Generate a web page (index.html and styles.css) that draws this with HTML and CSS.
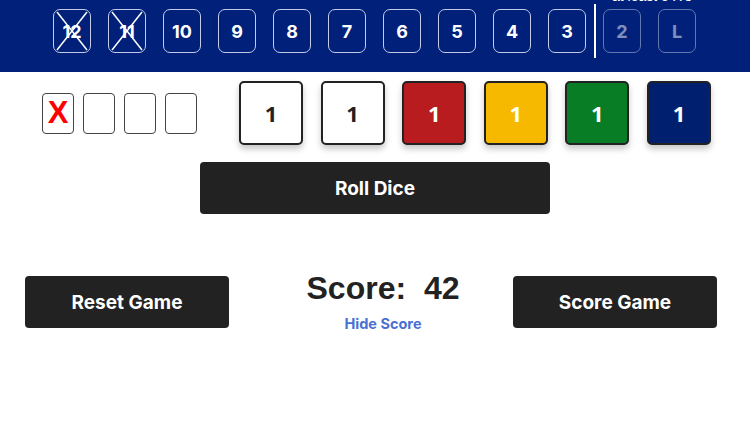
FILE: index.html
```html
<!DOCTYPE html>
<html lang="en">
<head>
  <meta charset="UTF-8">
  <meta name="viewport" content="width=device-width, initial-scale=1">
  <title>Qwixx Row</title>
  <link rel="stylesheet" href="styles.css">
</head>
<body>
  <!-- Score row -->
  <header class="score-row">
    <div class="cell crossed">12<svg class="cross" viewBox="0 0 38 44"><line x1="4" y1="3" x2="34" y2="41"/><line x1="34" y1="3" x2="4" y2="41"/></svg></div>
    <div class="cell crossed">11<svg class="cross" viewBox="0 0 38 44"><line x1="4" y1="3" x2="34" y2="41"/><line x1="34" y1="3" x2="4" y2="41"/></svg></div>
    <div class="cell">10</div>
    <div class="cell">9</div>
    <div class="cell">8</div>
    <div class="cell">7</div>
    <div class="cell">6</div>
    <div class="cell">5</div>
    <div class="cell">4</div>
    <div class="cell">3</div>
    <div class="lock-group">
      <span class="lock-label">at least 5 X's</span>
      <div class="cell disabled">2</div>
      <div class="cell disabled">L</div>
    </div>
  </header>

  <!-- Penalties and dice -->
  <section class="dice-row">
    <div class="penalties">
      <div class="penalty marked">X</div>
      <div class="penalty"></div>
      <div class="penalty"></div>
      <div class="penalty"></div>
    </div>
    <div class="dice">
      <div class="die white">1</div>
      <div class="die white">1</div>
      <div class="die red">1</div>
      <div class="die yellow">1</div>
      <div class="die green">1</div>
      <div class="die blue">1</div>
    </div>
  </section>

  <div class="roll-wrap">
    <button class="btn roll">Roll Dice</button>
  </div>

  <section class="bottom-row">
    <button class="btn wide">Reset Game</button>
    <div class="score-box">
      <div class="score">Score:&nbsp; 42</div>
      <a class="hide-score" href="#">Hide Score</a>
    </div>
    <button class="btn wide">Score Game</button>
  </section>
</body>
</html>
```

FILE: styles.css
```css
body {
  margin: 0;
  background: #fff;
  font-family: 'Inter', 'Liberation Sans', sans-serif;
  color: #222;
  overflow: hidden;
}

.score-row {
  display: flex;
  align-items: center;
  gap: 17px;
  height: 72px;
  box-sizing: border-box;
  padding: 9px 0 19px 53px;
  background-color: #00207a;
}

.cell {
  position: relative;
  width: 38px;
  height: 44px;
  box-sizing: border-box;
  border: 1px solid #c3cbe6;
  border-radius: 7px;
  display: flex;
  align-items: center;
  justify-content: center;
  color: #fff;
  font-size: 18px;
  font-weight: 700;
  flex-shrink: 0;
}

.cell.disabled {
  opacity: 0.5;
}

.cross {
  position: absolute;
  left: -1px;
  top: -1px;
  width: 38px;
  height: 44px;
}

.cross line {
  stroke: #fff;
  stroke-width: 1.5;
}

.lock-group {
  position: relative;
  display: flex;
  align-items: center;
  gap: 17px;
  height: 54px;
  margin-left: -9px;
  padding-left: 7px;
  border-left: 2px solid #fff;
}

.lock-label {
  position: absolute;
  left: 16px;
  top: -16px;
  color: #fff;
  font-family: 'Liberation Sans', sans-serif;
  font-size: 14px;
  line-height: 16px;
  white-space: nowrap;
}

.dice-row {
  display: flex;
  align-items: center;
  margin-top: 9px;
  padding-left: 42px;
}

.penalties {
  display: flex;
  gap: 9px;
}

.penalty {
  width: 32px;
  height: 41px;
  box-sizing: border-box;
  border: 1px solid #444;
  border-radius: 4px;
  display: flex;
  align-items: center;
  justify-content: center;
  font-family: 'Liberation Sans', sans-serif;
  font-size: 31px;
  font-weight: 700;
  color: #f00;
}

.dice {
  display: flex;
  gap: 17.6px;
  margin-left: 42px;
}

.die {
  width: 64px;
  height: 64px;
  box-sizing: border-box;
  border: 2px solid #222;
  border-radius: 5px;
  display: flex;
  align-items: center;
  justify-content: center;
  font-family: 'Open Sans', sans-serif;
  font-size: 22px;
  font-weight: 700;
  box-shadow: 0 4px 6px rgba(0, 0, 0, 0.22);
}

.die.white { background: #fff; color: #222; }
.die.red { background: #b81c1f; color: #fff; }
.die.yellow { background: #f7b900; color: #fff; }
.die.green { background: #097d25; color: #fff; }
.die.blue { background: #00206f; color: #fff; }

.roll-wrap {
  display: flex;
  justify-content: center;
  margin-top: 17px;
}

.btn {
  height: 52px;
  border: none;
  border-radius: 4px;
  background-color: #222;
  color: #fff;
  font-family: 'Inter', 'Liberation Sans', sans-serif;
  font-size: 19px;
  font-weight: 700;
  cursor: pointer;
}

.btn.roll {
  width: 350px;
}

.btn.wide {
  width: 204px;
  flex-shrink: 0;
}

.bottom-row {
  display: flex;
  align-items: flex-start;
  margin-top: 62px;
  padding: 0 33px 0 25px;
}

.score-box {
  flex: 1;
  padding-left: 24px;
  text-align: center;
}

.score {
  font-family: 'Liberation Sans', sans-serif;
  font-size: 32px;
  font-weight: 700;
  line-height: 36px;
  margin-top: -6px;
}

.hide-score {
  display: inline-block;
  margin-top: 9px;
  color: #4a6fd3;
  font-size: 14.5px;
  font-weight: 700;
  text-decoration: none;
}
```
